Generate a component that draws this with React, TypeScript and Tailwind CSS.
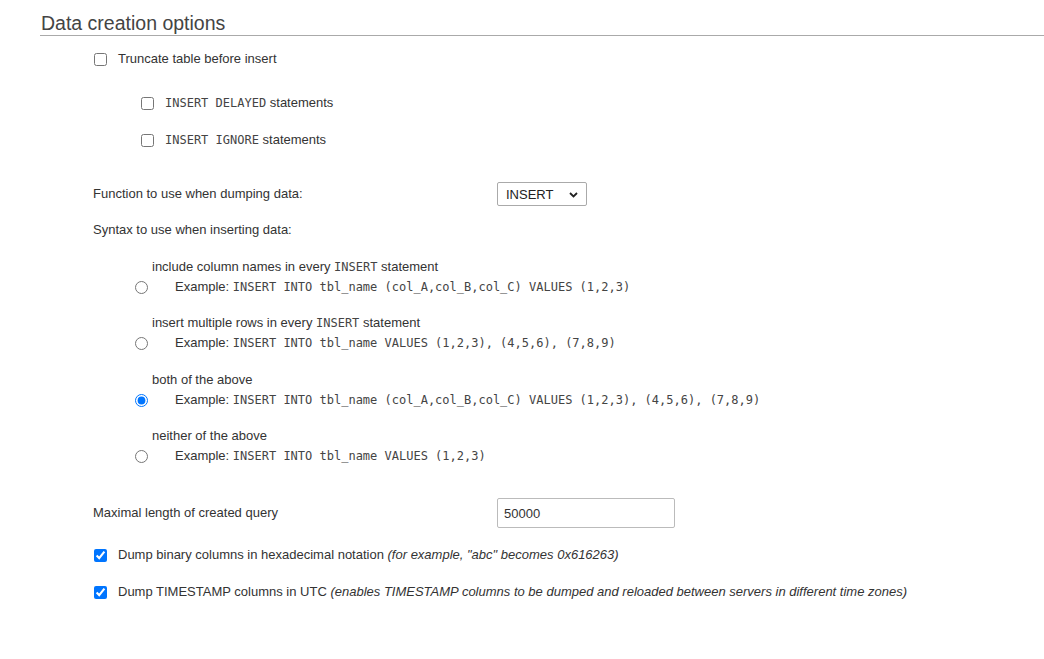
import React, { useState } from 'react';

const mono = "font-['DejaVu_Sans_Mono','Liberation_Mono',monospace] text-[12px] text-[#444]";

const syntaxOptions = [
  {
    id: 'complete',
    label: (
      <>
        include column names in every <code className={mono}>INSERT</code> statement
      </>
    ),
    example: 'INSERT INTO tbl_name (col_A,col_B,col_C) VALUES (1,2,3)',
    gap: 'mt-[17px]',
  },
  {
    id: 'extended',
    label: (
      <>
        insert multiple rows in every <code className={mono}>INSERT</code> statement
      </>
    ),
    example: 'INSERT INTO tbl_name VALUES (1,2,3), (4,5,6), (7,8,9)',
    gap: 'mt-[16px]',
  },
  {
    id: 'both',
    label: <>both of the above</>,
    example: 'INSERT INTO tbl_name (col_A,col_B,col_C) VALUES (1,2,3), (4,5,6), (7,8,9)',
    gap: 'mt-[17px]',
  },
  {
    id: 'none',
    label: <>neither of the above</>,
    example: 'INSERT INTO tbl_name VALUES (1,2,3)',
    gap: 'mt-[16px]',
  },
];

const Check: React.FC<{ checked?: boolean }> = ({ checked }) => (
  <input type="checkbox" defaultChecked={checked} className="m-0 h-[13px] w-[13px] shrink-0" />
);

const App: React.FC = () => {
  const [syntax, setSyntax] = useState('both');

  return (
    <div className="min-h-screen bg-white pl-[40px] font-['Liberation_Sans',Arial,sans-serif] text-[13px] text-[#333]">
      {/* Heading */}
      <h2 className="h-[36px] border-b border-[#aaa] pb-[1px] pl-[1px] pt-[12px] text-[19.5px] leading-[22px] text-[#444]">
        Data creation options
      </h2>

      {/* Truncate */}
      <label className="ml-[54px] mt-[13px] flex h-[20px] items-center gap-[11px]">
        <Check />
        <span>Truncate table before insert</span>
      </label>

      <label className="ml-[101px] mt-[24px] flex h-[20px] items-center gap-[11px]">
        <Check />
        <span>
          <code className={mono}>INSERT DELAYED</code> statements
        </span>
      </label>

      <label className="ml-[101px] mt-[17px] flex h-[20px] items-center gap-[11px]">
        <Check />
        <span>
          <code className={mono}>INSERT IGNORE</code> statements
        </span>
      </label>

      {/* Function */}
      <div className="ml-[53px] mt-[32px] flex h-[24px] items-center">
        <span className="w-[404px]">Function to use when dumping data:</span>
        <div className="relative h-[24px] w-[90px]">
          <select
            defaultValue="INSERT"
            className="h-full w-full appearance-none rounded-[2px] border border-[#aaa] bg-white pl-[8px] text-[13px] leading-none text-[#222] outline-none"
          >
            <option>INSERT</option>
            <option>UPDATE</option>
            <option>REPLACE</option>
          </select>
          <svg
            className="pointer-events-none absolute right-[9px] top-[10px]"
            width="9"
            height="6"
            viewBox="0 0 9 6"
            fill="none"
          >
            <path d="M1 1l3.5 3.5L8 1" stroke="#222" strokeWidth="1.8" />
          </svg>
        </div>
      </div>

      {/* Syntax */}
      <div className="ml-[53px] mt-[14px] flex h-[20px] items-center">Syntax to use when inserting data:</div>

      {syntaxOptions.map((opt) => (
        <div key={opt.id} className={opt.gap}>
          <div className="ml-[112px] flex h-[20px] items-center">
            <span>{opt.label}</span>
          </div>
          <label className="ml-[95px] flex h-[20px] items-center gap-[27px]">
            <input
              type="radio"
              name="sql_insert_syntax"
              checked={syntax === opt.id}
              onChange={() => setSyntax(opt.id)}
              className="m-0 h-[13px] w-[13px] shrink-0"
            />
            <span className="whitespace-nowrap">
              Example: <code className={mono}>{opt.example}</code>
            </span>
          </label>
        </div>
      ))}

      {/* Max length */}
      <div className="ml-[53px] mt-[32px] flex h-[30px] items-center">
        <span className="w-[404px]">Maximal length of created query</span>
        <input
          type="text"
          defaultValue="50000"
          className="h-[30px] w-[178px] rounded-[2px] border border-[#bbb] px-[6px] text-[13px] text-[#333] outline-none"
        />
      </div>

      <label className="ml-[54px] mt-[17px] flex h-[20px] items-center gap-[11px]">
        <Check checked />
        <span>
          Dump binary columns in hexadecimal notation <em>(for example, "abc" becomes 0x616263)</em>
        </span>
      </label>

      <label className="ml-[54px] mt-[17px] flex h-[20px] items-center gap-[11px]">
        <Check checked />
        <span>
          Dump TIMESTAMP columns in UTC{' '}
          <em>(enables TIMESTAMP columns to be dumped and reloaded between servers in different time zones)</em>
        </span>
      </label>
    </div>
  );
};

export default App;
